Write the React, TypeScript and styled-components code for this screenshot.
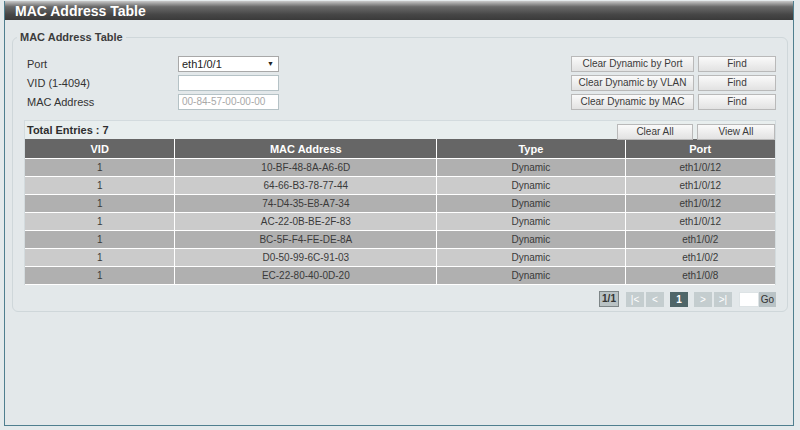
import styled, { createGlobalStyle } from "styled-components";

const GlobalStyle = createGlobalStyle`
  body {
    margin: 0;
    background: #e4eaec;
    font-family: "Liberation Sans", Arial, sans-serif;
  }
`;

const Frame = styled.div`
  width: 788px;
  height: 424px;
  margin: 1px 0 0 4px;
  border: 1px solid #4f7f8f;
  border-top: none;
  background: #e3e8ea;
  display: flex;
  flex-direction: column;
`;

const TitleBar = styled.div`
  height: 19px;
  line-height: 20px;
  padding-left: 10px;
  background: linear-gradient(#c9c9c9 0%, #6a6a6a 30%, #474747 70%, #3a3a3a 100%);
  color: #fff;
  font-weight: bold;
  font-size: 14px;
`;

const Content = styled.div`
  padding: 11px 5px 0 7px;
`;

const Fieldset = styled.fieldset`
  margin: 0;
  border: 1px solid #cfd7da;
  border-radius: 6px;
  padding: 6px 11px 4px 11px;
`;

const Legend = styled.legend`
  font-size: 11px;
  font-weight: bold;
  color: #3c3c3c;
  padding: 0 3px;
  margin-left: -7px;
`;

const FormArea = styled.div`
  display: flex;
  justify-content: space-between;
  padding: 7px 0 0 3px;
`;

const FieldGrid = styled.div`
  display: grid;
  grid-template-columns: 151px 101px;
  row-gap: 3px;
  align-items: center;
  font-size: 11px;
  color: #333;
`;

const Label = styled.span`
  line-height: 16px;
`;

const Select = styled.div`
  height: 14px;
  border: 1px solid #a8a8a8;
  background: #fff;
  font-size: 11px;
  color: #222;
  line-height: 14px;
  padding: 0 4px 0 3px;
  display: flex;
  justify-content: space-between;
  span:last-child {
    font-size: 7px;
  }
`;

const Input = styled.div<{ $placeholder?: boolean }>`
  height: 14px;
  border: 1px solid #b5c2c6;
  background: #fff;
  font-size: 10px;
  line-height: 14px;
  padding-left: 3px;
  color: ${(p) => (p.$placeholder ? "#a8a8a8" : "#222")};
`;

const ButtonGrid = styled.div`
  display: grid;
  grid-template-columns: 123px 78px;
  column-gap: 4px;
  row-gap: 3px;
  align-content: start;
`;

const Button = styled.div<{ $w?: number }>`
  height: 14px;
  line-height: 14px;
  border: 1px solid #b9b9b9;
  background: linear-gradient(#fafafa, #e2e2e2);
  color: #3a3a3a;
  font-size: 10px;
  text-align: center;
  ${(p) => (p.$w ? `width: ${p.$w}px;` : "")}
`;

const TableBox = styled.div`
  margin-top: 10px;
  border: 1px solid #d3dbde;
  border-bottom: none;
`;

const Toolbar = styled.div`
  height: 18px;
  display: flex;
  align-items: center;
  justify-content: space-between;
  background: #e8eeee;
  padding-left: 2px;
`;

const Total = styled.span`
  font-size: 11px;
  font-weight: bold;
  color: #2e2e2e;
`;

const ToolButtons = styled.div`
  display: flex;
  gap: 4px;
  align-self: flex-end;
  margin-bottom: -1px;
`;

const Table = styled.table`
  width: 100%;
  border-collapse: collapse;
  font-size: 10px;
`;

const Th = styled.th<{ $w: number }>`
  width: ${(p) => p.$w}px;
  height: 19px;
  background: #666;
  color: #fff;
  font-size: 11px;
  font-weight: bold;
  border: 1px solid #fff;
  border-top: none;
  padding: 0;
  &:first-child { border-left: none; }
  &:last-child { border-right: none; }
`;

const Tr = styled.tr<{ $dark: boolean }>`
  background: ${(p) => (p.$dark ? "#b0b0b0" : "#cbcbcb")};
`;

const Td = styled.td`
  height: 17px;
  padding: 0;
  text-align: center;
  color: #3a3a3a;
  border: 1px solid #fff;
  &:first-child { border-left: none; }
  &:last-child { border-right: none; }
`;

const Pager = styled.div`
  display: flex;
  justify-content: flex-end;
  align-items: center;
  margin-top: 6px;
  font-size: 11px;
`;

const PageInfo = styled.div`
  width: 18px;
  height: 14px;
  line-height: 14px;
  border: 1px solid #7d8587;
  background: #b9c2c4;
  color: #333;
  text-align: center;
  font-size: 10px;
  font-weight: bold;
  margin-right: 7px;
`;

const PageBtn = styled.div<{ $active?: boolean; $gap?: number }>`
  width: 18px;
  height: 15px;
  line-height: 15px;
  text-align: center;
  background: ${(p) => (p.$active ? "#4f6669" : "#c4cdcf")};
  color: #fff;
  font-weight: ${(p) => (p.$active ? "bold" : "normal")};
  font-size: 10px;
  margin-right: ${(p) => p.$gap ?? 2}px;
`;

const GoInput = styled.div`
  width: 20px;
  height: 15px;
  background: #fff;
  border: 1px solid #dde3e5;
  box-sizing: border-box;
`;

const GoBtn = styled.div`
  width: 17px;
  height: 15px;
  line-height: 15px;
  background: #b9c3c6;
  color: #333;
  font-size: 10px;
  text-align: center;
`;

const rows = [
  ["1", "10-BF-48-8A-A6-6D", "Dynamic", "eth1/0/12"],
  ["1", "64-66-B3-78-77-44", "Dynamic", "eth1/0/12"],
  ["1", "74-D4-35-E8-A7-34", "Dynamic", "eth1/0/12"],
  ["1", "AC-22-0B-BE-2F-83", "Dynamic", "eth1/0/12"],
  ["1", "BC-5F-F4-FE-DE-8A", "Dynamic", "eth1/0/2"],
  ["1", "D0-50-99-6C-91-03", "Dynamic", "eth1/0/2"],
  ["1", "EC-22-80-40-0D-20", "Dynamic", "eth1/0/8"],
];

export default function App() {
  return (
    <>
      <GlobalStyle />
      <Frame>
        <TitleBar>MAC Address Table</TitleBar>
        <Content>
          <Fieldset>
            <Legend>MAC Address Table</Legend>
            <FormArea>
              <FieldGrid>
                <Label>Port</Label>
                <Select>
                  <span>eth1/0/1</span>
                  <span>▼</span>
                </Select>
                <Label>VID (1-4094)</Label>
                <Input />
                <Label>MAC Address</Label>
                <Input $placeholder>00-84-57-00-00-00</Input>
              </FieldGrid>
              <ButtonGrid>
                <Button>Clear Dynamic by Port</Button>
                <Button>Find</Button>
                <Button>Clear Dynamic by VLAN</Button>
                <Button>Find</Button>
                <Button>Clear Dynamic by MAC</Button>
                <Button>Find</Button>
              </ButtonGrid>
            </FormArea>
            <TableBox>
              <Toolbar>
                <Total>Total Entries : 7</Total>
                <ToolButtons>
                  <Button $w={74}>Clear All</Button>
                  <Button $w={76}>View All</Button>
                </ToolButtons>
              </Toolbar>
              <Table>
                <thead>
                  <tr>
                    <Th $w={150}>VID</Th>
                    <Th $w={262}>MAC Address</Th>
                    <Th $w={188}>Type</Th>
                    <Th $w={150}>Port</Th>
                  </tr>
                </thead>
                <tbody>
                  {rows.map((r, i) => (
                    <Tr key={i} $dark={i % 2 === 0}>
                      {r.map((c, j) => (
                        <Td key={j}>{c}</Td>
                      ))}
                    </Tr>
                  ))}
                </tbody>
              </Table>
            </TableBox>
            <Pager>
              <PageInfo>1/1</PageInfo>
              <PageBtn>|&lt;</PageBtn>
              <PageBtn $gap={6}>&lt;</PageBtn>
              <PageBtn $active $gap={6}>1</PageBtn>
              <PageBtn>&gt;</PageBtn>
              <PageBtn $gap={7}>&gt;|</PageBtn>
              <GoInput />
              <GoBtn>Go</GoBtn>
            </Pager>
          </Fieldset>
        </Content>
      </Frame>
    </>
  );
}
